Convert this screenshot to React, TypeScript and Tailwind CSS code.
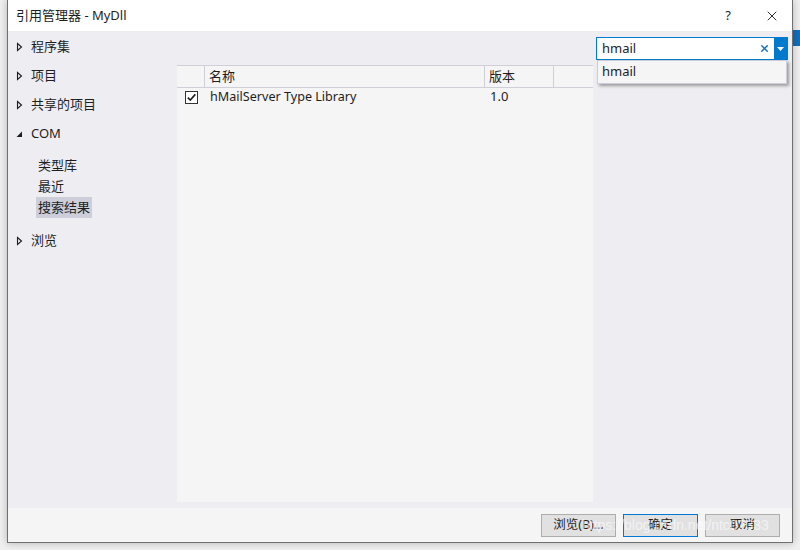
import { X } from 'lucide-react'

const FONT = { fontFamily: '"Noto Sans", "Noto Sans CJK SC", sans-serif' }

function Collapsed() {
    return (
        <svg width="7" height="10" viewBox="0 0 7 10" className="shrink-0">
            <path d="M1.5 1.5 L5.5 5 L1.5 8.5 Z" fill="none" stroke="#1e1e1e" strokeWidth="1.1" />
        </svg>
    )
}

function Expanded() {
    return (
        <svg width="7" height="10" viewBox="0 0 7 10" className="shrink-0">
            <path d="M6 2.5 L6 8 L0.5 8 Z" fill="#1e1e1e" />
        </svg>
    )
}

function NavItem({ label, open }: { label: string; open?: boolean }) {
    return (
        <div className="flex items-center h-[29px] pl-[8px] gap-[8px] text-[13px] text-[#1e1e1e]">
            {open ? <Expanded /> : <Collapsed />}
            <span>{label}</span>
        </div>
    )
}

function Btn({ label, primary }: { label: string; primary?: boolean }) {
    return (
        <button
            className={`w-[75px] h-[23px] text-[12.5px] text-[#1e1e1e] bg-[#e1e1e1] border ${
                primary ? 'border-[#0078d7]' : 'border-[#adadad]'
            }`}
        >
            {label}
        </button>
    )
}

export default function App() {
    return (
        <div className="relative w-[800px] h-[550px] overflow-hidden bg-[#f0f0f0]" style={FONT}>
            {/* right edge of the IDE behind the dialog */}
            <div className="absolute right-0 top-[30px] w-[8px] h-[16px] bg-[#0e70c0]" />

            <div className="relative ml-[7px] w-[786px] h-[543px] flex flex-col border-l border-r border-b border-[#707070] shadow-[0_0_8px_rgba(0,0,0,0.25)]">
                {/* title bar */}
                <div className="h-[31px] bg-white flex items-center pl-[8px] pr-[12px] shrink-0">
                    <span className="text-[13px] text-[#1e1e1e]">引用管理器 - MyDll</span>
                    <span className="ml-auto text-[13px] text-[#1e1e1e] w-[16px] text-center">?</span>
                    <X className="ml-[28px] w-[16px] h-[16px] text-[#1e1e1e]" strokeWidth={1.4} />
                </div>

                {/* body */}
                <div className="flex-1 flex bg-[#eeeef2] min-h-0">
                    {/* nav */}
                    <div className="w-[169px] shrink-0 pt-[1px]">
                        <NavItem label="程序集" />
                        <NavItem label="项目" />
                        <NavItem label="共享的项目" />
                        <NavItem label="COM" open />
                        <div className="flex flex-col pt-[7px] pl-[28px] text-[13px] text-[#1e1e1e]">
                            <span className="h-[21px] leading-[21px] px-[2px]">类型库</span>
                            <span className="h-[21px] leading-[21px] px-[2px]">最近</span>
                            <span className="h-[21px] leading-[21px] px-[2px] bg-[#ccceda] self-start">搜索结果</span>
                        </div>
                        <div className="mt-[8px]">
                            <NavItem label="浏览" />
                        </div>
                    </div>

                    {/* list */}
                    <div className="w-[416px] shrink-0 mt-[34px] mb-[6px] bg-[#f5f5f5] flex flex-col text-[13px] text-[#1e1e1e]">
                        <div className="flex h-[23px] border-t border-b border-[#cfcfd8] bg-[#f5f5f5]">
                            <div className="w-[28px] border-r border-[#cfcfd8]" />
                            <div className="w-[280px] border-r border-[#cfcfd8] pl-[4px] leading-[21px]">名称</div>
                            <div className="w-[69px] border-r border-[#cfcfd8] pl-[4px] leading-[21px]">版本</div>
                            <div className="flex-1" />
                        </div>
                        <div className="flex items-center h-[18px]">
                            <div className="w-[28px] flex justify-center">
                                <div className="w-[13px] h-[13px] border border-[#333] bg-white flex items-center justify-center">
                                    <svg width="11" height="11" viewBox="0 0 11 11">
                                        <path d="M1.8 5.6 L4.3 8 L9.3 2.4" fill="none" stroke="#1e1e1e" strokeWidth="1.6" />
                                    </svg>
                                </div>
                            </div>
                            <div className="w-[281px] pl-[5px] text-[12.6px]">hMailServer Type Library</div>
                            <div className="pl-[4px]">1.0</div>
                        </div>
                    </div>

                    {/* right search area */}
                    <div className="flex-1 pl-[3px] pt-[6px] pr-[4px]">
                        <div className="relative w-[192px]">
                            <div className="flex h-[23px] border border-[#007acc] bg-white">
                                <span className="flex-1 pl-[5px] text-[13px] leading-[21px] text-[#1e1e1e]">hmail</span>
                                <X className="w-[11px] h-[11px] self-center mr-[4px] text-[#0e70c0]" strokeWidth={3} />
                                <div className="w-[13px] bg-[#007acc] flex items-center justify-center">
                                    <svg width="7" height="4" viewBox="0 0 7 4">
                                        <path d="M0 0 L7 0 L3.5 4 Z" fill="#fff" />
                                    </svg>
                                </div>
                            </div>
                            {/* suggestion popup */}
                            <div className="absolute left-[1px] top-[23px] w-[190px] h-[24px] bg-[#f5f5f5] border border-[#cccedb] shadow-[2px_2px_3px_rgba(0,0,0,0.35)] pl-[4px] text-[13px] leading-[20px] text-[#1e1e1e]">
                                hmail
                            </div>
                        </div>
                    </div>
                </div>

                {/* footer */}
                <div className="h-[34px] bg-[#f5f5f5] shrink-0 flex items-center justify-end gap-[7px] pr-[12px] pt-[1px]">
                    <Btn label="浏览(B)..." />
                    <Btn label="确定" primary />
                    <Btn label="取消" />
                </div>
            </div>

            {/* watermark */}
            <div className="absolute left-[582px] top-[515px] text-[14px] text-white/60 pointer-events-none" style={{ fontFamily: '"Liberation Sans", sans-serif' }}>
                https://blog.csdn.net/ntc02333
            </div>
        </div>
    )
}
